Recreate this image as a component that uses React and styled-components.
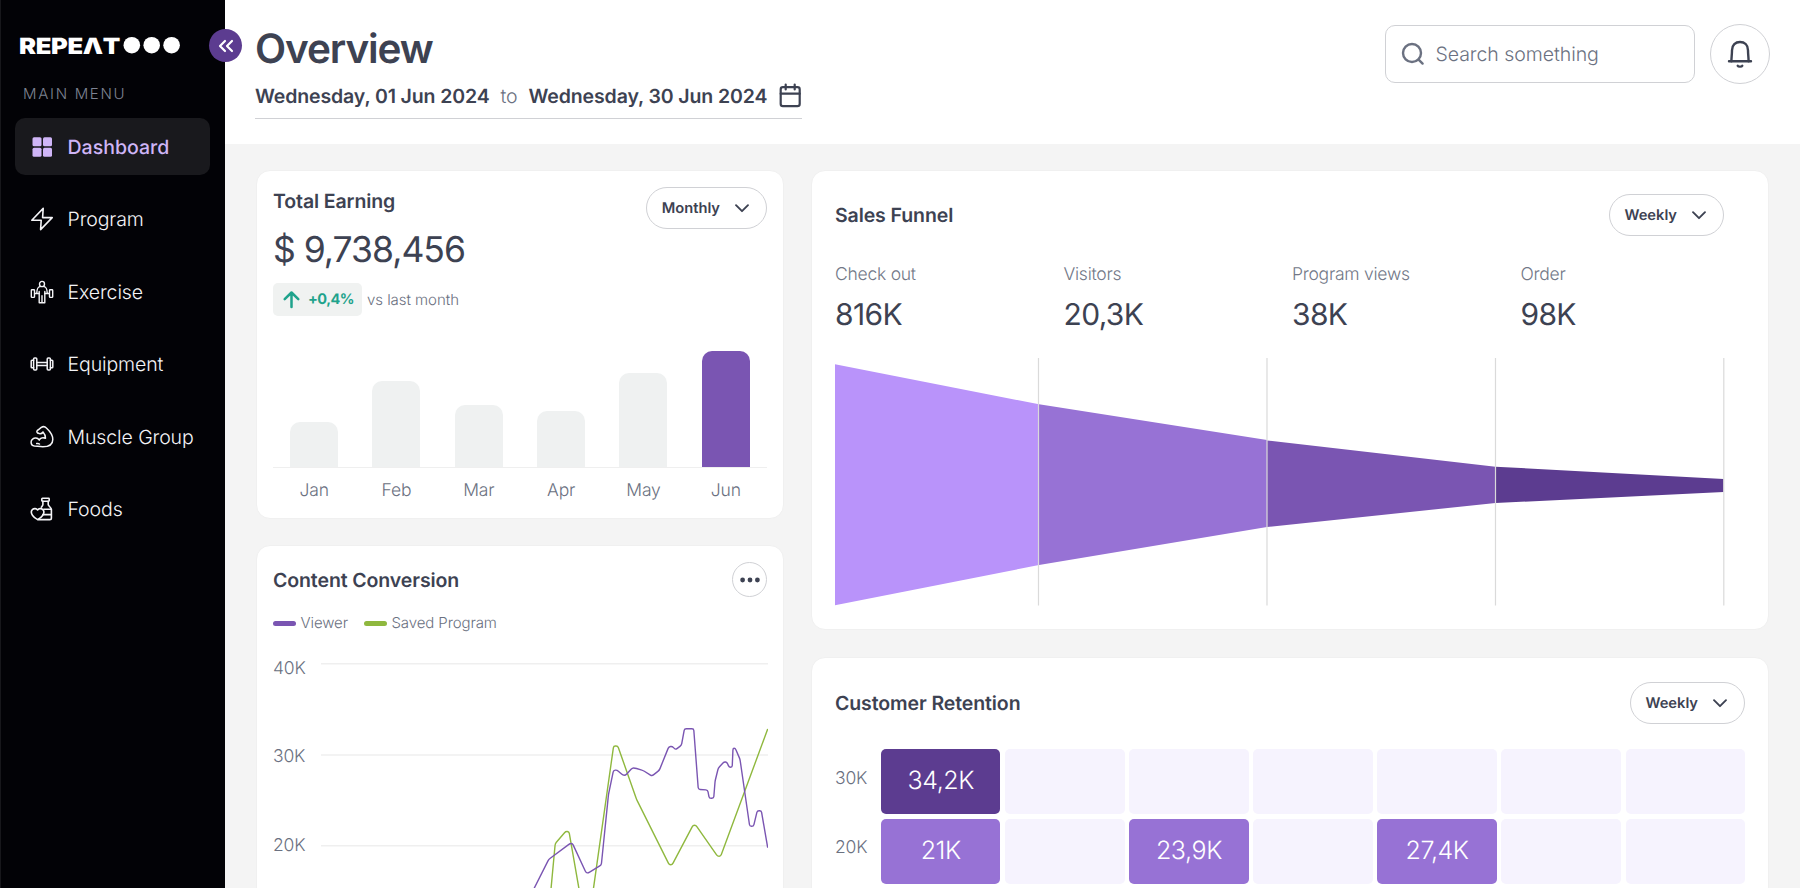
import React from "react";
import styled, { createGlobalStyle } from "styled-components";

const c = {
  ink: "#3d4252",
  muted: "#6b7181",
  line: "#d0d1d5",
  grid: "#efefef",
  purple: "#7a55b2",
  deep: "#5c3c90",
  mid: "#9772d5",
  light: "#b993fa",
  pale: "#f6f3fe",
  green: "#8fb83e",
  teal: "#1fa38c",
};

const Global = createGlobalStyle`
  *, *::before, *::after { box-sizing: border-box; }
  body { margin: 0; background: #f4f4f4; overflow: hidden; text-rendering: geometricPrecision; }
  h1, h2, p { margin: 0; font-weight: inherit; }
  button { font: inherit; background: none; padding: 0; cursor: pointer; text-rendering: inherit; }
`;

const Page = styled.div`
  display: flex;
  height: 888px;
  overflow: hidden;
  background: #f4f4f4;
  color: ${c.ink};
  font-family: Inter, "Liberation Sans", sans-serif;
`;

/* ---------- sidebar ---------- */

const Sidebar = styled.aside`
  position: relative;
  flex: none;
  width: 225px;
  padding: 30px 14px 0;
  background: #020206;
  border-left: 1px solid #17171b;
`;

const Logo = styled.svg`
  display: block;
  width: 165px;
  height: 32px;
  margin-left: 4px;
`;

const CollapseButton = styled.button`
  position: absolute;
  top: 29px;
  right: -17px;
  z-index: 2;
  display: flex;
  align-items: center;
  justify-content: center;
  width: 33px;
  height: 33px;
  border: 0;
  border-radius: 50%;
  background: ${c.deep};
`;

const MenuTitle = styled.p`
  margin: 22px 0 14px 8px;
  font-size: 15px;
  line-height: 20px;
  letter-spacing: 1.7px;
  color: #7d8292;
  font-weight: 350;
`;

const Menu = styled.nav`
  display: flex;
  flex-direction: column;
  gap: 15.6px;
`;

const MenuItem = styled.a`
  display: flex;
  align-items: center;
  gap: 13.5px;
  width: 195px;
  height: 57px;
  padding-left: 15px;
  border-radius: 10px;
  background: ${(p) => (p.$active ? "#19191d" : "transparent")};
  color: ${(p) => (p.$active ? "#cfb5f7" : "#f4f4f7")};
  font-size: 19.5px;
  font-weight: ${(p) => (p.$active ? 500 : 350)};
  letter-spacing: ${(p) => (p.$active ? 0 : -0.1)}px;
  white-space: nowrap;
`;

const Glyph = styled.svg`
  display: block;
  flex: none;
  fill: none;
  stroke: currentColor;
  stroke-width: ${(p) => p.$weight || 1.5};
  stroke-linecap: round;
  stroke-linejoin: round;
`;

/* ---------- header ---------- */

const Main = styled.main`
  flex: 1;
  min-width: 0;
`;

const Header = styled.header`
  display: flex;
  justify-content: space-between;
  align-items: flex-start;
  height: 144px;
  padding: 24px 30px 0 30px;
  background: #fff;
`;

const PageTitle = styled.h1`
  padding-top: 1px;
  font-size: 40.5px;
  font-weight: 600;
  line-height: 48px;
  letter-spacing: -1.1px;
`;

const DateRange = styled.div`
  display: flex;
  align-items: center;
  width: 547px;
  height: 46px;
  border-bottom: 1px solid ${c.line};
  font-size: 19.5px;
  font-weight: 600;
  letter-spacing: -0.12px;
  white-space: nowrap;
`;

const To = styled.span`
  margin: 0 11px;
  font-weight: 350;
  color: ${c.muted};
`;

const CalendarIcon = styled(Glyph)`
  margin-left: auto;
`;

const Tools = styled.div`
  display: flex;
  align-items: center;
  gap: 15px;
`;

const SearchBox = styled.label`
  display: flex;
  align-items: center;
  gap: 9.5px;
  width: 310px;
  height: 58px;
  padding-left: 14px;
  border: 1px solid ${c.line};
  border-radius: 10px;
  color: ${c.muted};
  font-size: 19.5px;
  font-weight: 350;
  letter-spacing: -0.05px;
`;

const RoundButton = styled.button`
  display: flex;
  align-items: center;
  justify-content: center;
  width: ${(p) => p.$size}px;
  height: ${(p) => p.$size}px;
  border: 1px solid ${c.line};
  border-radius: 50%;
  color: ${c.ink};
`;

/* ---------- cards ---------- */

const Board = styled.div`
  display: grid;
  grid-template-columns: 528px 958px;
  gap: 27px;
  padding: 26px 31px 0;
`;

const Column = styled.div`
  display: flex;
  flex-direction: column;
  gap: ${(p) => p.$gap}px;
`;

const Card = styled.section`
  height: ${(p) => p.$height}px;
  padding: ${(p) => p.$pad};
  border: 1px solid #f0f0f0;
  border-radius: 14px;
  background: #fff;
`;

const CardHead = styled.div`
  display: flex;
  justify-content: space-between;
  align-items: ${(p) => p.$align || "center"};
  padding-right: ${(p) => p.$inset || 0}px;
`;

const CardTitle = styled.h2`
  font-size: 19.5px;
  font-weight: 600;
  line-height: 28px;
  letter-spacing: -0.1px;
`;

const Pill = styled.button`
  display: flex;
  align-items: center;
  gap: 12.5px;
  height: 42px;
  padding: 0 15.5px 0 14.5px;
  border: 1px solid ${c.line};
  border-radius: 21px;
  color: ${c.ink};
  font-size: 14.7px;
  font-weight: 600;
`;

const Earned = styled.p`
  margin-top: -1px;
  font-size: 35.5px;
  line-height: 44px;
  letter-spacing: -1px;
`;

const Trend = styled.div`
  display: flex;
  align-items: center;
  gap: 5px;
  margin-top: 11px;
  font-size: 15px;
  font-weight: 350;
  letter-spacing: -0.05px;
  color: ${c.muted};
`;

const TrendBadge = styled.span`
  display: flex;
  align-items: center;
  gap: 7px;
  width: 89px;
  height: 33px;
  padding-left: 9px;
  border-radius: 5px;
  background: #f0f2f1;
  color: ${c.teal};
  font-size: 14.5px;
  font-weight: 700;
  letter-spacing: -0.5px;
`;

const Bars = styled.div`
  display: grid;
  grid-template-columns: repeat(6, 1fr);
  justify-items: center;
  align-items: end;
  height: 152px;
  border-bottom: 1px solid ${c.grid};
`;

const Bar = styled.div`
  width: 48px;
  border-radius: 10px 10px 0 0;
  background: ${(p) => (p.$active ? c.purple : "#eff1f1")};
`;

const Months = styled.div`
  display: grid;
  grid-template-columns: repeat(6, 1fr);
  margin-top: 11px;
  font-size: 17.5px;
  font-weight: 350;
  line-height: 24px;
  letter-spacing: -0.1px;
  text-align: center;
  color: ${c.muted};
`;

const Legend = styled.div`
  display: flex;
  gap: 16px;
  margin-top: 16px;
  font-size: 15px;
  font-weight: 350;
  line-height: 20px;
  letter-spacing: -0.1px;
  color: ${c.muted};
`;

const LegendItem = styled.span`
  display: flex;
  align-items: center;
  gap: 4.5px;

  &::before {
    content: "";
    width: 23px;
    height: 5px;
    border-radius: 3px;
    background: ${(p) => p.$color};
  }
`;

const LineChart = styled.div`
  display: flex;
  justify-content: space-between;
  margin: 30px -1px 0 0;
`;

const Scale = styled.div`
  display: flex;
  flex-direction: column;
  gap: ${(p) => p.$gap}px;
  margin-top: ${(p) => p.$top}px;
  font-size: 17.5px;
  font-weight: 350;
  line-height: 20px;
  letter-spacing: -0.2px;
  color: ${c.muted};
`;

const Plot = styled.svg`
  display: block;
  flex: none;
`;

const Steps = styled.div`
  display: grid;
  grid-template-columns: repeat(4, 228.5px);
  margin-top: 27px;
`;

const StepName = styled.p`
  font-size: 17.5px;
  font-weight: 350;
  line-height: 24px;
  letter-spacing: -0.25px;
  color: #727887;
`;

const StepValue = styled.p`
  margin-top: 10px;
  font-size: 30px;
  line-height: 36px;
  letter-spacing: -0.65px;
`;

const Funnel = styled(Plot)`
  margin-top: 25px;
`;

const Heat = styled.div`
  display: flex;
  justify-content: space-between;
  margin-top: 25px;
`;

const Cells = styled.div`
  display: grid;
  grid-template-columns: repeat(7, 1fr);
  grid-auto-rows: 65.5px;
  gap: 4.6px;
  width: 864px;
`;

const tones = { deep: c.deep, mid: c.mid };

const Cell = styled.div`
  display: flex;
  align-items: center;
  justify-content: center;
  border-radius: 5px;
  background: ${(p) => tones[p.$tone] || c.pale};
  color: #fff;
  font-size: 25px;
  font-weight: 350;
  letter-spacing: -0.4px;
`;

/* ---------- icons ---------- */

const icons = {
  Dashboard: (
    <g fill="currentColor" stroke="none">
      <rect x="2.5" y="2.3" width="9" height="9" rx="1.5" />
      <rect x="13" y="2.3" width="9" height="9" rx="1.5" />
      <rect x="2.5" y="12.8" width="9" height="9" rx="1.5" />
      <rect x="13" y="12.8" width="9" height="9" rx="1.5" />
    </g>
  ),
  Program: <path d="M13.2 1.4 1.8 13.2h9.4L10.6 22.6 22.2 10.6h-9.6z" strokeWidth="1.6" />,
  Exercise: (
    <g strokeWidth="1.4">
      <path d="M9.5 3.900a2.500 2.500 0 1 1 5 0c0 1.500-1 2.700-2.500 2.700S9.500 5.400 9.500 3.900z" />
      <path d="M9.800 6.600C7.500 7.300 7 8.500 6.800 12.800M14.200 6.600c2.300.7 2.800 1.900 3 6.200" />
      <path d="M9.200 11.500v11.300h5.600V11.500M12 15.800v7" />
      <path d="M4.600 13.500h4.600M14.800 13.500h4.600" />
      <rect x="1.300" y="9.800" width="3.200" height="7.600" rx=".7" />
      <rect x="19.500" y="9.800" width="3.200" height="7.600" rx=".7" />
    </g>
  ),
  Equipment: (
    <g strokeWidth="1.5">
      <rect x="3.600" y="6" width="3.200" height="12" rx="1" />
      <rect x="17.200" y="6" width="3.200" height="12" rx="1" />
      <path d="M3.600 8.300H2c-.5 0-.8.300-.8.800v5.800c0 .5.300.8.800.8h1.600M20.400 8.300H22c.5 0 .8.300.8.800v5.800c0 .5-.3.800-.8.800h-1.600" />
      <path d="M6.800 10.500h10.400M6.800 13.500h10.400" />
    </g>
  ),
  "Muscle Group": (
    <g strokeWidth="1.5">
      <path d="M8 8.200c-1.700-.9-1.300-2.700.3-3.400l3-2.500c1.800-1 3.700-.8 5.100.7 3.700 3.400 6.400 6.900 6.400 11.400 0 4.600-3.600 7.300-10 7.300-3.600 0-6.100-.6-8.400-.6-2.200-.2-3.300-2-3.300-4 0-2.600 2.500-4.200 4.800-4 1.400.1 2.500.8 3.300 1.800" />
      <path d="M8 8.200c1.700.9 3.900.5 5-1.200 1.600 1.700 2.500 3.700 2.500 6.300M9.200 14.900c1.200-2.100 4-2.600 6.300-1.600M6.700 18.500c1.100-.2 2-.1 2.800.5" />
    </g>
  ),
  Foods: (
    <g strokeWidth="1.6">
      <rect x="11.800" y="1.300" width="7.400" height="2.900" rx=".6" />
      <path d="M12.900 4.200v3.300c0 1-1 1.700-1.500 2.700M18.200 4.200v3.300c0 1.700 3.200 2.500 3.200 5.200v8.200c0 1-.7 1.700-1.700 1.700H8" />
      <path d="M13.800 12.300h7.500M12.800 17.600h8.500" />
      <path d="M7.600 13c-1.300-1.700-3.600-1.800-5-.6-1.700 1.500-1.400 4.100 0 6.100 1.300 1.900 3.300 3.300 5 4.100 1.700-.8 3.700-2.200 5-4.100 1.400-2 1.700-4.600 0-6.100-1.400-1.200-3.700-1.100-5 .6z" />
    </g>
  ),
};

const Chevron = () => (
  <Glyph width="18" height="18" viewBox="0 0 18 18" $weight={1.9}>
    <path d="m3 6.200 6 6 6-6" />
  </Glyph>
);

/* ---------- data ---------- */

const months = [
  ["Jan", 45],
  ["Feb", 86],
  ["Mar", 62],
  ["Apr", 56],
  ["May", 94],
  ["Jun", 116],
];

const viewer = [
  [212.8, 226], [227.8, 196.3], [249, 180.5], [251.5, 180.5], [265, 209.7], [267.1, 210],
  [280.3, 202], [287.5, 131.3], [292.5, 107.3], [296, 107], [301.9, 112.3],
  [304.5, 112.3], [311.3, 105], [313.8, 105], [321.8, 107.3], [331, 113],
  [338.3, 107.3], [347.8, 83.7], [351.3, 83.3], [354.5, 86.7], [360.4, 82.3],
  [363.5, 65.7], [372.7, 65.7], [377.3, 126.3], [386.7, 127], [388.3, 135.3],
  [392.7, 135.3], [394.1, 118], [397.3, 105], [403.2, 98.7], [406, 99.3],
  [408.1, 104.3], [411.2, 104.3], [412, 85.3], [414.3, 85.3], [419, 96.3],
  [428.7, 163.3], [432.5, 163.3], [436.3, 147.7], [440.3, 147.7], [446.7, 184.7],
];

const saved = [
  [230, 226], [234.2, 180.7], [244.7, 168.3], [248, 168.7], [258, 226], [265, 262],
  [272.4, 226], [292.6, 83], [296.8, 83], [315.5, 136.3], [348.2, 201.7],
  [351.2, 201.7], [372, 162.3], [375, 162.3], [396.6, 193.3], [399.7, 193.3],
  [446.7, 66],
];

/* Polyline whose corners are softened by a small radius. */
function softLine(points, radius = 1.8) {
  let d = `M${points[0]}`;
  for (let i = 1; i < points.length - 1; i++) {
    const [x, y] = points[i];
    const toward = ([px, py]) => {
      const len = Math.hypot(px - x, py - y);
      const t = Math.min(radius, len / 2) / len;
      return [x + (px - x) * t, y + (py - y) * t];
    };
    d += `L${toward(points[i - 1])}Q${x},${y} ${toward(points[i + 1])}`;
  }
  return `${d}L${points[points.length - 1]}`;
}

const steps = [
  ["Check out", "816K"],
  ["Visitors", "20,3K"],
  ["Program views", "38K"],
  ["Order", "98K"],
];

const funnel = [
  [c.light, "0,6.3 204,46.3 204,207 0,247.3"],
  [c.mid, "204,46.3 432,82 432,169 204,207"],
  [c.purple, "432,82.5 660.5,108.7 660.5,145 432,169"],
  [c.deep, "660.5,108.7 888.5,121 888.5,134 660.5,145"],
];

const rows = [
  [["34,2K", "deep"], null, null, null, null, null, null],
  [["21K", "mid"], null, ["23,9K", "mid"], null, ["27,4K", "mid"], null, null],
];

export default function App() {
  return (
    <Page>
      <Global />
      <Sidebar>
        <Logo viewBox="0 0 165 32" fill="#fff">
          <text
            x="0"
            y="23.500"
            fontSize="22.500"
            fontWeight="900"
            letterSpacing="-0.300"
            textLength="101"
            lengthAdjust="spacingAndGlyphs"
          >
            REPEΛT
          </text>
          <circle cx="112.800" cy="15.200" r="8.300" />
          <circle cx="132.700" cy="15.200" r="8.300" />
          <circle cx="152.600" cy="15.200" r="8.300" />
        </Logo>
        <CollapseButton aria-label="Collapse">
          <Glyph width="16" height="14" viewBox="0 0 16 14" $weight={2.2} color="#fff">
            <path d="M7 2 2 7l5 5M14 2 9 7l5 5" />
          </Glyph>
        </CollapseButton>
        <MenuTitle>MAIN MENU</MenuTitle>
        <Menu>
          {Object.keys(icons).map((name) => (
            <MenuItem key={name} $active={name === "Dashboard"}>
              <Glyph width="24" height="24" viewBox="0 0 24 24">
                {icons[name]}
              </Glyph>
              {name}
            </MenuItem>
          ))}
        </Menu>
      </Sidebar>

      <Main>
        <Header>
          <div>
            <PageTitle>Overview</PageTitle>
            <DateRange>
              Wednesday, 01 Jun 2024
              <To>to</To>
              Wednesday, 30 Jun 2024
              <CalendarIcon width="23" height="25" viewBox="0 0 23 25" $weight={2.2}>
                <rect x="1.700" y="4.200" width="19" height="19" rx="2.200" />
                <path d="M1.700 10.700h19M6.700 1.500v5M15.700 1.500v5" />
              </CalendarIcon>
            </DateRange>
          </div>
          <Tools>
            <SearchBox>
              <Glyph width="26" height="26" viewBox="0 0 26 26" $weight={2.4}>
                <circle cx="12" cy="12" r="9" />
                <path d="m18.600 18.600 4 4" />
              </Glyph>
              Search something
            </SearchBox>
            <RoundButton $size={60} aria-label="Notifications">
              <Glyph width="30" height="30" viewBox="0 0 30 30" $weight={2.4}>
                <path d="M6.400 22.200C6.400 19 7 15 7 11.200 7 6 10.500 3 15 3s8 3 8 8.200c0 3.800.600 7.800.600 11" />
                <path d="M4 22.200h22M12.700 26.700c.6 1.200 4 1.200 4.600 0" />
              </Glyph>
            </RoundButton>
          </Tools>
        </Header>

        <Board>
          <Column $gap={26.5}>
            <Card $height={348.5} $pad="16px 16px">
              <CardHead $align="flex-start">
                <CardTitle>Total Earning</CardTitle>
                <Pill>
                  Monthly <Chevron />
                </Pill>
              </CardHead>
              <Earned>$ 9,738,456</Earned>
              <Trend>
                <TrendBadge>
                  <Glyph width="19" height="19" viewBox="0 0 19 19" $weight={2.5}>
                    <path d="M9.500 17V2.500M2.700 9.200l6.800-6.700 6.800 6.700" />
                  </Glyph>
                  +0,4%
                </TrendBadge>
                vs last month
              </Trend>
              <Bars>
                {months.map(([name, value]) => (
                  <Bar key={name} $active={name === "Jun"} style={{ height: value }} />
                ))}
              </Bars>
              <Months>
                {months.map(([name]) => (
                  <span key={name}>{name}</span>
                ))}
              </Months>
            </Card>

            <Card $height={500} $pad="16px 16px">
              <CardHead>
                <CardTitle>Content Conversion</CardTitle>
                <RoundButton $size={35} aria-label="More">
                  <svg width="20" height="6" viewBox="0 0 20 6" fill={c.ink}>
                    <circle cx="2.600" cy="3" r="2.400" />
                    <circle cx="10" cy="3" r="2.400" />
                    <circle cx="17.400" cy="3" r="2.400" />
                  </svg>
                </RoundButton>
              </CardHead>
              <Legend>
                <LegendItem $color={c.purple}>Viewer</LegendItem>
                <LegendItem $color={c.green}>Saved Program</LegendItem>
              </Legend>
              <LineChart>
                <Scale $gap={68.4} $top={-4}>
                  <span>40K</span>
                  <span>30K</span>
                  <span>20K</span>
                </Scale>
                <Plot width="447" height="270" viewBox="0 0 447 270" fill="none">
                  <path d="M0 .8h447M0 92h447M0 182.700h447" stroke={c.grid} strokeWidth="1.400" />
                  <path d={softLine(saved)} stroke={c.green} strokeWidth="1.400" />
                  <path d={softLine(viewer)} stroke={c.purple} strokeWidth="1.400" />
                </Plot>
              </LineChart>
            </Card>
          </Column>

          <Column $gap={27}>
            <Card $height={459.5} $pad="23px 23px">
              <CardHead $inset={21}>
                <CardTitle>Sales Funnel</CardTitle>
                <Pill>
                  Weekly <Chevron />
                </Pill>
              </CardHead>
              <Steps>
                {steps.map(([name, value]) => (
                  <div key={name}>
                    <StepName>{name}</StepName>
                    <StepValue>{value}</StepValue>
                  </div>
                ))}
              </Steps>
              <Funnel width="890" height="248" viewBox="0 0 890 248">
                {funnel.map(([fill, points]) => (
                  <polygon key={fill} fill={fill} points={points} />
                ))}
                <path
                  d="M203.500 0v247.500M432 0v247.500M660.500 0v247.500M888.800 0v247.500"
                  stroke="#dadada"
                  strokeWidth="1.200"
                />
              </Funnel>
            </Card>

            <Card $height={400} $pad="24px 23px">
              <CardHead>
                <CardTitle>Customer Retention</CardTitle>
                <Pill>
                  Weekly <Chevron />
                </Pill>
              </CardHead>
              <Heat>
                <Scale $gap={48.7} $top={20.5}>
                  <span>30K</span>
                  <span>20K</span>
                </Scale>
                <Cells>
                  {rows.flat().map((cell, i) => (
                    <Cell key={i} $tone={cell?.[1]}>
                      {cell?.[0]}
                    </Cell>
                  ))}
                </Cells>
              </Heat>
            </Card>
          </Column>
        </Board>
      </Main>
    </Page>
  );
}
